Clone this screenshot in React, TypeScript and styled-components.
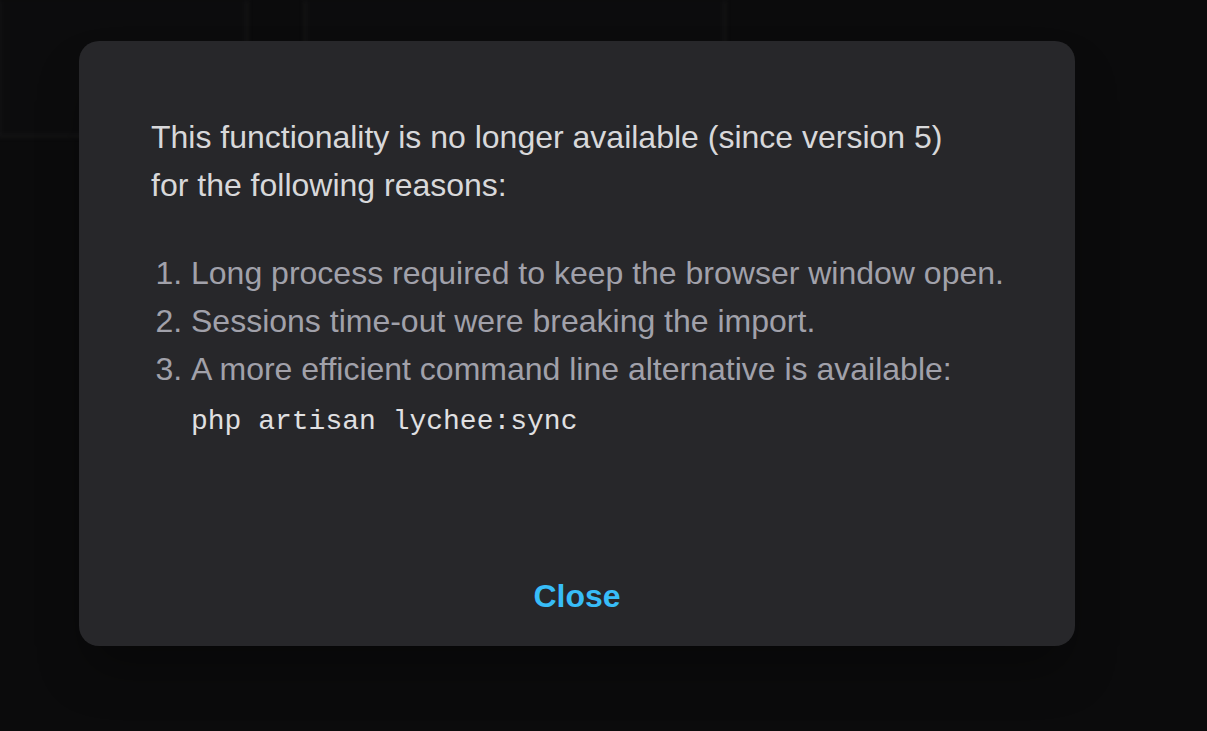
import React from "react";
import styled, { createGlobalStyle } from "styled-components";

const Global = createGlobalStyle`
  html, body { margin: 0; padding: 0; background: #0b0b0c; }
  body { font-family: "Liberation Sans", Arial, sans-serif; }
`;

const Screen = styled.div`
  position: relative;
  width: 1207px;
  height: 731px;
  overflow: hidden;
  background: #0b0b0c;
`;

const Gallery = styled.div`
  display: flex;
  gap: 56px;
  filter: blur(2px);
  opacity: 0.9;
`;

const Tile = styled.div<{ $w: number }>`
  width: ${(p) => p.$w}px;
  height: 135px;
  flex: none;
  background: #0d0d0e;
  border-right: 2px solid #19191a;
  border-bottom: 2px solid #19191a;
  border-left: 2px solid #19191a;
`;

const Dialog = styled.div`
  position: absolute;
  left: 79px;
  top: 41px;
  width: 996px;
  height: 605px;
  box-sizing: border-box;
  background: #27272a;
  border-radius: 20px;
  box-shadow: 0 30px 50px -10px rgba(0, 0, 0, 0.35);
  display: flex;
  flex-direction: column;
  padding: 72px 48px 34px 72px;
`;

const Body = styled.div`
  flex: 1;
`;

const Lead = styled.p`
  margin: 0;
  font-size: 32px;
  line-height: 48px;
  color: #d8d8da;
`;

const List = styled.ol`
  margin: 40px 0 0 0;
  padding-left: 40px;
  font-size: 32px;
  line-height: 48px;
  color: #a1a1aa;
  white-space: nowrap;
`;

const Item = styled.li``;

const Code = styled.code`
  display: block;
  margin-top: 4px;
  font-family: "Liberation Mono", "DejaVu Sans Mono", monospace;
  font-size: 28px;
  line-height: 50px;
  color: #e0e0e2;
`;

const Footer = styled.div`
  display: flex;
  justify-content: center;
  padding-right: 24px;
`;

const CloseButton = styled.button`
  background: none;
  border: none;
  padding: 0;
  font-family: "Liberation Sans", Arial, sans-serif;
  font-weight: 700;
  font-size: 32px;
  line-height: 32px;
  color: #38bdf8;
  cursor: pointer;
`;

export default function App() {
  return (
    <Screen>
      <Global />
      <Gallery>
        <Tile $w={246} style={{ marginLeft: -2 }} />
        <Tile $w={418} />
      </Gallery>
      <Dialog>
        <Body>
          <Lead>
            This functionality is no longer available (since version 5)
            <br />
            for the following reasons:
          </Lead>
          <List>
            <Item>Long process required to keep the browser window open.</Item>
            <Item>Sessions time-out were breaking the import.</Item>
            <Item>
              A more efficient command line alternative is available:
              <Code>php artisan lychee:sync</Code>
            </Item>
          </List>
        </Body>
        <Footer>
          <CloseButton>Close</CloseButton>
        </Footer>
      </Dialog>
    </Screen>
  );
}
